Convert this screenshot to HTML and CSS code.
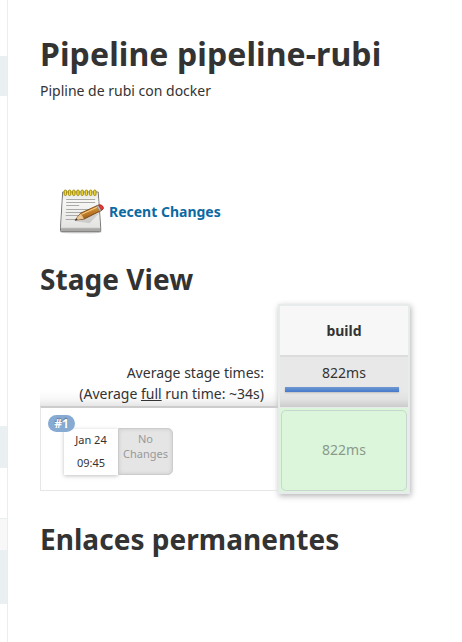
FILE: index.html
```html
<!DOCTYPE html>
<html lang="es">
<head>
<meta charset="utf-8">
<title>Pipeline pipeline-rubi</title>
<link rel="stylesheet" href="styles.css">
</head>
<body>
<aside class="side">
  <div class="band band-a"></div>
  <div class="band band-b"></div>
  <div class="pane-head"></div>
  <div class="band band-c"></div>
</aside>
<main class="main">
  <h1>Pipeline pipeline-rubi</h1>
  <p class="description">Pipline de rubi con docker</p>
  <div class="recent">
    <svg class="notepad" width="48" height="48" viewBox="0 0 48 48">
      <defs>
        <linearGradient id="paper" x1="0" y1="0" x2="0" y2="1"><stop offset="0" stop-color="#e4e4e2"/><stop offset=".25" stop-color="#f7f7f6"/><stop offset="1" stop-color="#e3e3e1"/></linearGradient>
        <linearGradient id="wood" x1="0" y1="0" x2=".45" y2="1"><stop offset="0" stop-color="#f0bd67"/><stop offset=".5" stop-color="#d18b31"/><stop offset="1" stop-color="#8d5212"/></linearGradient>
      </defs>
      <g transform="translate(1.200 -.5)">
      <ellipse cx="24" cy="44.500" rx="21" ry="1.600" fill="#000" opacity=".14"/>
      <path d="M5.500 4.500h35.500L43.500 40v3.200q0 1-1 1H4.300q-1 0-1-1V40z" fill="#bcbcba" stroke="#777" stroke-width="1"/>
      <path d="M6 5h34.500L43 40.300H3.800z" fill="url(#paper)"/>
      <path d="M4 41h39v2.500H4z" fill="#aaa9a7"/>
      <path d="M9 12h29M9 15h29M9 18h13M9 22h29M8.500 25h29M8.500 28h18M8.500 32h13" stroke="#a9a9a7" stroke-width="1"/>
      <g fill="#f5dc35" stroke="#9a8300" stroke-width=".9">
        <rect x="7" y="2.500" width="2.400" height="5.500" rx="1.200"/><rect x="11.200" y="2.500" width="2.400" height="5.500" rx="1.200"/><rect x="15.400" y="2.500" width="2.400" height="5.500" rx="1.200"/><rect x="19.600" y="2.500" width="2.400" height="5.500" rx="1.200"/><rect x="23.800" y="2.500" width="2.400" height="5.500" rx="1.200"/><rect x="28" y="2.500" width="2.400" height="5.500" rx="1.200"/><rect x="32.200" y="2.500" width="2.400" height="5.500" rx="1.200"/><rect x="36.400" y="2.500" width="2.400" height="5.500" rx="1.200"/>
      </g>
      </g>
      <g transform="translate(1.600 -.3)">
      <path d="M18 33.500L42 25l2-2-12 12.500z" fill="#000" opacity=".12"/>
      <path d="M17.500 32.500l5.500-7L40.500 17.500q3-.8 4.500 1.500 1.200 2.200-1 3.700L26.500 31.300z" fill="url(#wood)" stroke="#754511" stroke-width=".9"/>
      <path d="M17.500 32.500l5.300-6.500 1.700 2 1.800 3z" fill="#ecc993"/>
      <path d="M17.200 32.800l1.600-2.300 1.400 1.500z" fill="#333"/>
      <path d="M24 26.600l16-7.300" stroke="#f8d48a" stroke-width="1"/>
      <path d="M38.800 18.200l2.100-.9 3.100 5.300-2 1z" fill="#b7b9b8" stroke="#777" stroke-width=".5"/>
      <path d="M41 17.400q3-.9 4.500 1.500 1.200 2.200-1.500 3.700z" fill="#e63b3b" stroke="#a31c1c" stroke-width=".6"/>
      </g>
    </svg>
    <a class="recent-link">Recent Changes</a>
  </div>
  <h2 class="stage-title">Stage View</h2>
  <section class="stage-view">
    <div class="runs">
      <div class="averages"><div>Average stage times:</div><div>(Average <u>full</u> run time: ~34s)</div></div>
      <div class="run">
        <span class="badge">#1</span>
        <div class="run-date"><div>Jan 24</div><div>09:45</div></div>
        <div class="changes">No<br>Changes</div>
      </div>
    </div>
    <div class="stage">
      <div class="stage-name">build</div>
      <div class="stage-average">822ms<div class="bar"></div></div>
      <div class="stage-cell"><div class="duration">822ms</div></div>
    </div>
  </section>
  <h2 class="links-title">Enlaces permanentes</h2>
</main>
</body>
</html>
```
FILE: styles.css
```css
* { box-sizing: border-box; }
body {
  margin: 0;
  height: 642px;
  overflow: hidden;
  display: flex;
  background: #fff;
  color: #333;
  font: 14px/20px "Noto Sans", sans-serif;
}
.side { width: 8px; flex: none; border-right: 1px solid #ebeced; }
.band { background: #eaeff2; }
.band-a { height: 40px; margin-top: 56px; }
.band-b { height: 42px; margin-top: 330px; }
.pane-head { height: 32px; margin-top: 50px; border-top: 1px solid #e9eeee; background: #f8f8f8; }
.band-c { height: 54px; }
.main { flex: 1; padding: 32px 0 0 32px; }
h1, h2, p { margin: 0; }
h1 { font-size: 32px; line-height: 44px; letter-spacing: .09px; white-space: nowrap; }
h2 { font-size: 28px; line-height: 38px; letter-spacing: .04px; white-space: nowrap; }
.description { margin-top: 5px; }
.recent { display: flex; align-items: center; margin: 87px 0 0 16px; height: 48px; }
.notepad { flex: none; }
.recent-link { margin-left: 5px; color: #0b6aa2; font-weight: 700; }
.stage-title { margin-top: 24px; }
.stage-view { display: flex; margin-top: 6px; }
.runs { width: 238px; padding-top: 46px; }
.averages {
  height: 56px;
  padding: 12px 14px 0 0;
  text-align: right;
  line-height: 21px;
  background: linear-gradient(to bottom, rgba(232, 232, 232, 0) 72%, rgba(232, 232, 232, .35) 88%, #e6e6e6);
}
.run {
  position: relative;
  display: flex;
  height: 85px;
  padding: 21px 0 0 23px;
  border: 1px solid #e6e6e6;
  border-top: 2px solid #ccc;
  border-right: 0;
}
.badge {
  position: absolute;
  left: 7px;
  top: 7px;
  width: 27px;
  height: 17px;
  border-radius: 9px;
  background: #86aad2;
  color: #fff;
  font-size: 12px;
  font-weight: 700;
  line-height: 17px;
  text-align: center;
  text-shadow: 0 -1px 1px rgba(0, 0, 0, .35);
}
.run-date {
  width: 54px;
  height: 46px;
  background: #fff;
  box-shadow: 0 1px 4px rgba(0, 0, 0, .25);
  font-size: 11px;
  line-height: 23px;
  text-align: center;
}
.run-date div { margin-top: -1px; margin-bottom: 1px; }
.changes {
  width: 55px;
  height: 47px;
  margin-top: -1px;
  padding-top: 2px;
  border: 1px solid #ccc;
  border-radius: 0 5px 5px 0;
  background: #e5e5e5;
  box-shadow: inset 0 0 4px rgba(0, 0, 0, .12);
  color: #999;
  font-size: 11px;
  line-height: 15px;
  text-align: center;
}
.stage {
  width: 132px;
  height: 190px;
  border: 2px solid #e8ebec;
  background: #dcf6dc;
  box-shadow: 1px 2px 6px rgba(0, 0, 0, .3);
  text-align: center;
}
.stage-name {
  height: 51px;
  border-bottom: 2px solid #dcdcdc;
  background: #f7f7f7;
  font-weight: 700;
  line-height: 50px;
}
.stage-average {
  height: 50px;
  padding-top: 6px;
  background: linear-gradient(to bottom, #e8e8e8 68%, #e2e2e2 84%, #cbcbcb);
}
.bar {
  width: 114px;
  height: 5px;
  margin: 4px 0 0 5px;
  background: linear-gradient(#7199d4, #4579c8);
  box-shadow: 0 1px 2px rgba(0, 0, 0, .18);
}
.stage-cell { height: 85px; padding: 2px 1px; border-top: 1px solid #e8ebec; }
.duration {
  height: 81px;
  border: 1px solid #c9d6cf;
  border-radius: 5px;
  color: #8b998b;
  line-height: 78px;
}
.links-title { margin-top: 26px; }
```
